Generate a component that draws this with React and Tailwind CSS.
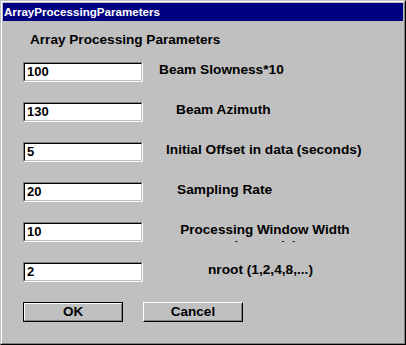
import React from "react";

const rows = [
  { value: "100", label: "Beam Slowness*10", ml: "ml-[16px]" },
  { value: "130", label: "Beam Azimuth", ml: "ml-[33px]" },
  { value: "5", label: "Initial Offset in data (seconds)", ml: "ml-[23px]" },
  { value: "20", label: "Sampling Rate", ml: "ml-[34px]" },
  { value: "10", label: "Processing Window Width", sub: "(seconds)" },
  { value: "2", label: "nroot (1,2,4,8,...)", ml: "ml-[65px]" },
];

// Sunken edit field, classic look
const Field = ({ value }) => (
  <div className="w-[120px] h-[20px] border border-t-[#808080] border-l-[#808080] border-b-white border-r-white">
    <div className="h-full border border-t-black border-l-black border-b-[#c0c0c0] border-r-[#c0c0c0] bg-white pl-[2px] text-[13px] font-bold leading-[16px]">
      {value}
    </div>
  </div>
);

const Button = ({ children, isDefault }) => (
  <div
    className={
      isDefault
        ? "w-[100px] h-[20px] border border-black"
        : "w-[100px] h-[20px] border border-t-white border-l-white border-b-black border-r-black"
    }
  >
    <div
      className={
        isDefault
          ? "h-full border border-t-white border-l-white border-b-[#808080] border-r-[#808080] bg-[#c0c0c0] flex items-center justify-center text-[13.5px] font-bold leading-[16px]"
          : "h-full border border-t-[#c0c0c0] border-l-[#c0c0c0] border-b-[#808080] border-r-[#808080] bg-[#c0c0c0] flex items-center justify-center text-[13.5px] font-bold leading-[16px]"
      }
    >
      {children}
    </div>
  </div>
);

export default function App() {
  return (
    <div
      className="w-[406px] h-[345px] bg-[#c0c0c0] border border-t-[#c0c0c0] border-l-[#c0c0c0] border-b-black border-r-black text-black"
      style={{ fontFamily: '"Liberation Sans", Arial, sans-serif' }}
    >
      <div className="h-full border border-t-white border-l-white border-b-[#808080] border-r-[#808080] p-px">
        {/* Title bar */}
        <div className="h-[18px] bg-[#000080] text-white text-[11.6px] font-bold leading-[18px] pl-[1px]">
          ArrayProcessingParameters
        </div>

        <div className="pl-[20px]">
          <div className="mt-[11px] ml-[7px] text-[13.6px] font-bold leading-[16px]">
            Array Processing Parameters
          </div>

          <div className="mt-[14px] flex flex-col gap-[20px]">
            {rows.map((r) => (
              <div key={r.value + r.label} className="flex items-start h-[20px]">
                <Field value={r.value} />
                {r.sub ? (
                  <div className="ml-[22px] w-[200px] shrink-0 h-[20px] overflow-hidden text-center text-[13.5px] font-bold leading-[16px]">
                    <div>{r.label}</div>
                    <div>{r.sub}</div>
                  </div>
                ) : (
                  <div className={r.ml + " text-[13.7px] font-bold leading-[16px]"}>
                    {r.label}
                  </div>
                )}
              </div>
            ))}
          </div>

          <div className="mt-[20px] flex gap-[20px]">
            <Button isDefault>OK</Button>
            <Button>Cancel</Button>
          </div>
        </div>
      </div>
    </div>
  );
}
